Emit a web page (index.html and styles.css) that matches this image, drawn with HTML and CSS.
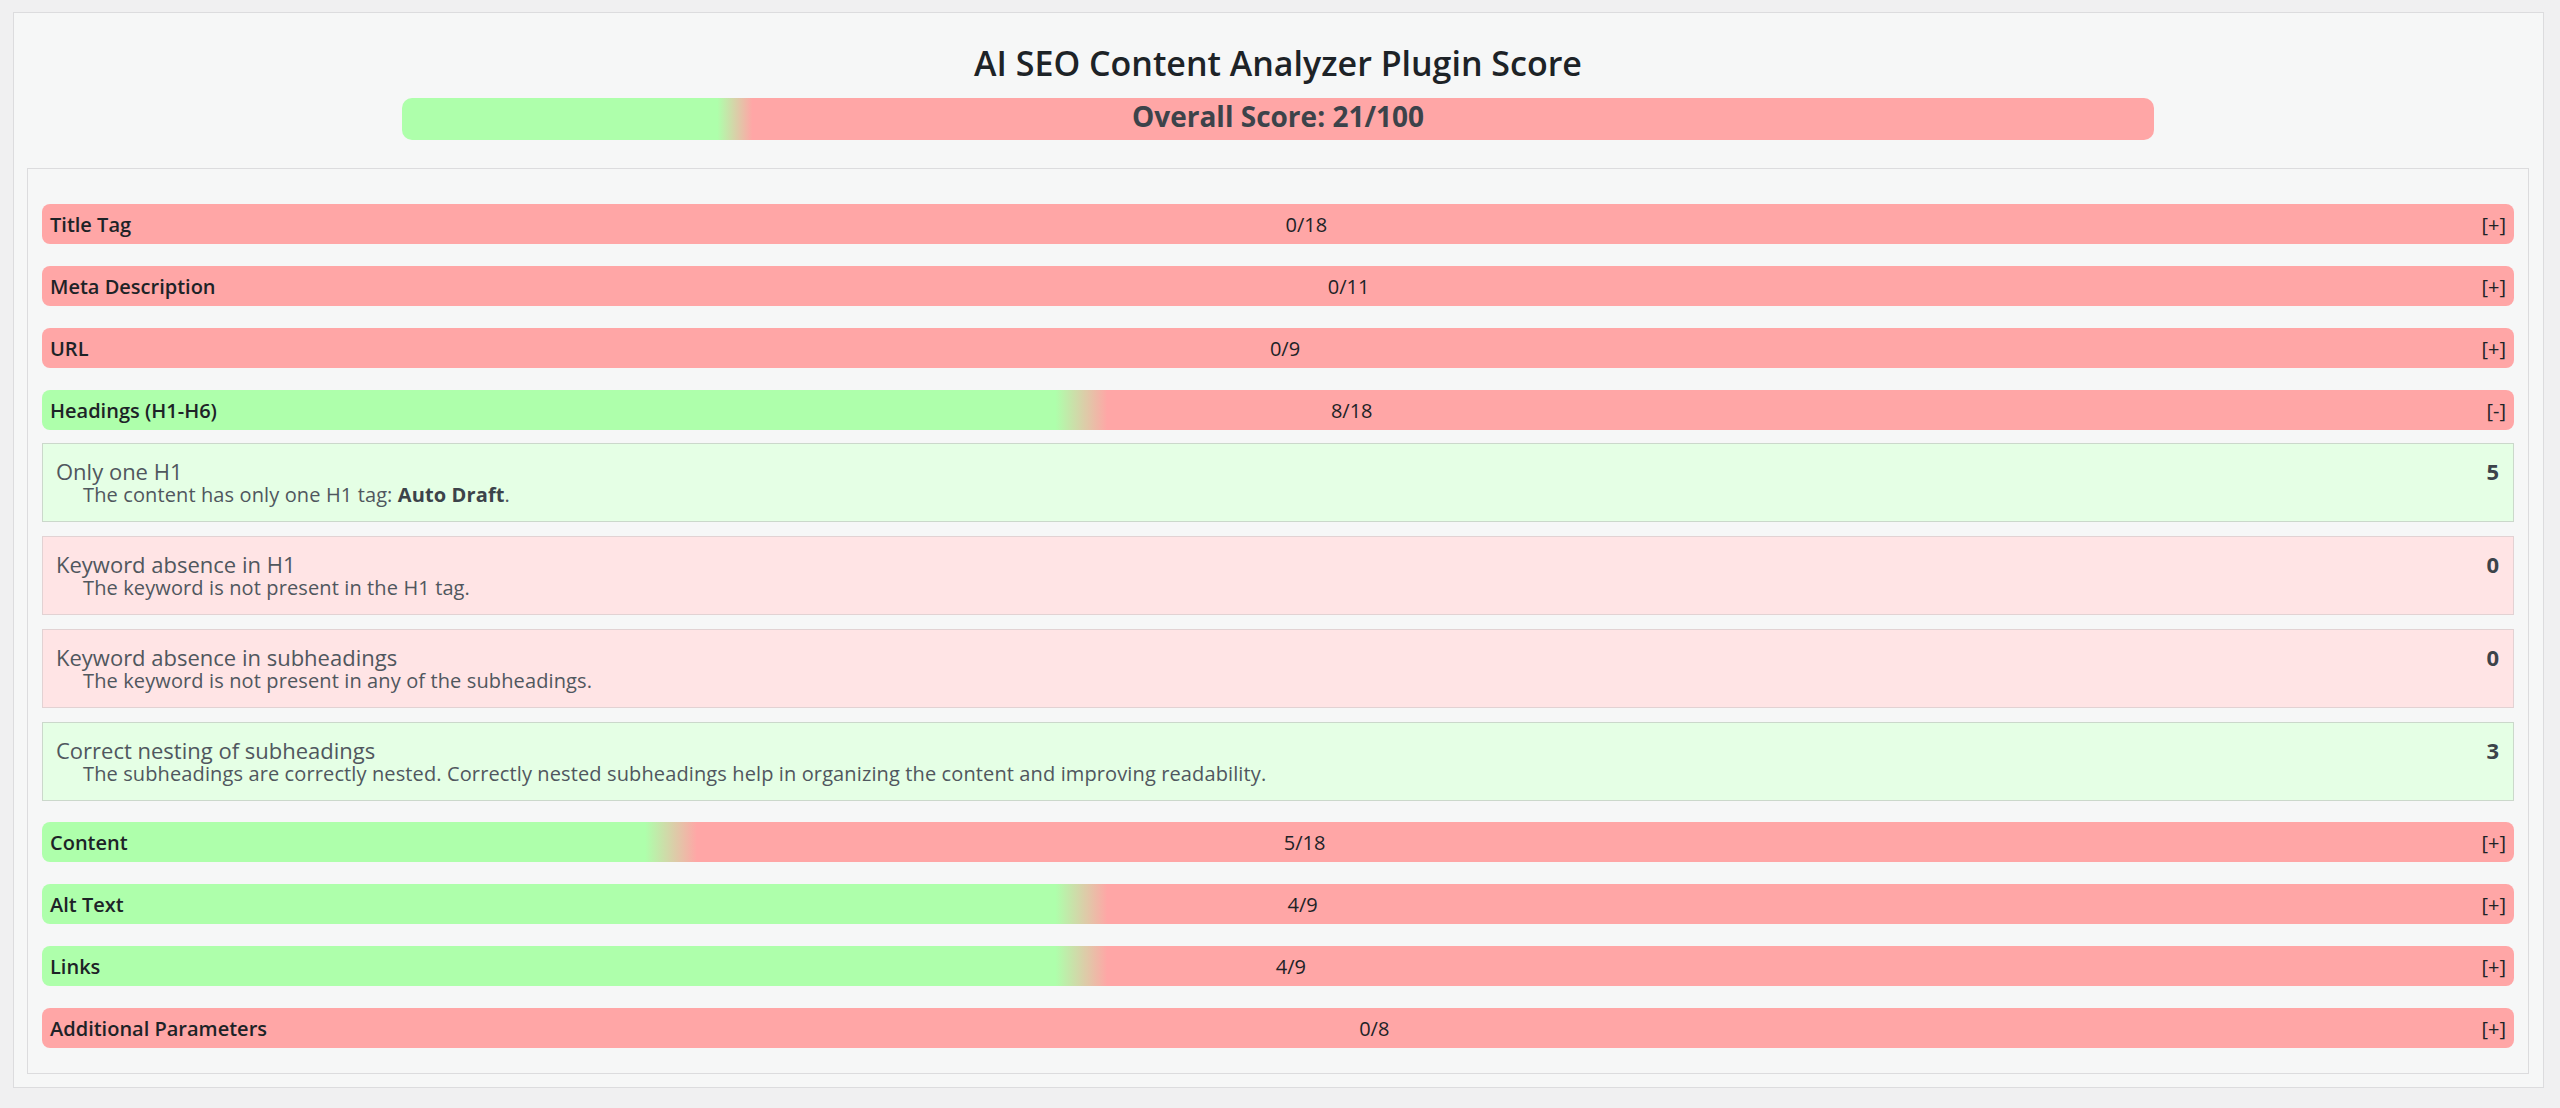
FILE: index.html
```html
<!DOCTYPE html>
<html lang="en">
<head>
<meta charset="utf-8">
<title>AI SEO Content Analyzer Plugin Score</title>
<link rel="stylesheet" href="styles.css">
</head>
<body>
<div class="panel">
  <h2 class="title">AI SEO Content Analyzer Plugin Score</h2>
  <div class="overall" style="--p: 21%">Overall Score: 21/100</div>
  <div class="sections">
    <div class="bar" style="--p: 0%"><span class="label">Title Tag</span><span class="score">0/18</span><span class="toggle">[+]</span></div>
    <div class="bar" style="--p: 0%"><span class="label">Meta Description</span><span class="score">0/11</span><span class="toggle">[+]</span></div>
    <div class="bar" style="--p: 0%"><span class="label">URL</span><span class="score">0/9</span><span class="toggle">[+]</span></div>
    <div class="bar open" style="--p: 44.4%"><span class="label">Headings (H1-H6)</span><span class="score">8/18</span><span class="toggle">[-]</span></div>
    <div class="items">
      <div class="item good">
        <div class="item-text">
          <div class="item-title">Only one H1</div>
          <div class="item-desc">The content has only one H1 tag: <strong>Auto Draft</strong>.</div>
        </div>
        <div class="item-points">5</div>
      </div>
      <div class="item bad">
        <div class="item-text">
          <div class="item-title">Keyword absence in H1</div>
          <div class="item-desc">The keyword is not present in the H1 tag.</div>
        </div>
        <div class="item-points">0</div>
      </div>
      <div class="item bad">
        <div class="item-text">
          <div class="item-title">Keyword absence in subheadings</div>
          <div class="item-desc">The keyword is not present in any of the subheadings.</div>
        </div>
        <div class="item-points">0</div>
      </div>
      <div class="item good">
        <div class="item-text">
          <div class="item-title">Correct nesting of subheadings</div>
          <div class="item-desc">The subheadings are correctly nested. Correctly nested subheadings help in organizing the content and improving readability.</div>
        </div>
        <div class="item-points">3</div>
      </div>
    </div>
    <div class="bar" style="--p: 27.8%"><span class="label">Content</span><span class="score">5/18</span><span class="toggle">[+]</span></div>
    <div class="bar" style="--p: 44.4%"><span class="label">Alt Text</span><span class="score">4/9</span><span class="toggle">[+]</span></div>
    <div class="bar" style="--p: 44.4%"><span class="label">Links</span><span class="score">4/9</span><span class="toggle">[+]</span></div>
    <div class="bar" style="--p: 0%"><span class="label">Additional Parameters</span><span class="score">0/8</span><span class="toggle">[+]</span></div>
  </div>
</div>
</body>
</html>
```
FILE: styles.css
```css
:root {
  --green: #aeffab;
  --red: #ffa6a6;
}

html {
  background: #f0f0f1;
}

body {
  margin: 12px 16px 20px 13px;
  font-family: "Open Sans", "Noto Sans", sans-serif;
  color: #1d2327;
  background: #f0f0f1;
}

.panel {
  background: #f6f7f7;
  border: 1px solid #dcdcde;
  padding: 0 14px 13px 13px;
}

.title {
  margin: 28px 0 13px;
  font-size: 34px;
  line-height: 44px;
  font-weight: 600;
  text-align: center;
  color: #1d2327;
}

.overall {
  width: 70%;
  margin: 0 auto 28px;
  height: 42px;
  box-sizing: border-box;
  padding-bottom: 6px;
  line-height: 36px;
  border-radius: 10px;
  text-align: center;
  font-size: 28px;
  font-weight: 700;
  color: #3c434a;
  background: linear-gradient(to right, var(--green) calc(var(--p) - 3%), var(--red) calc(var(--p) - 1%));
}

.sections {
  border: 1px solid #dcdcde;
  padding: 35px 14px 25px;
  display: flex;
  flex-direction: column;
  gap: 22px;
}

.bar {
  height: 40px;
  box-sizing: border-box;
  padding: 2px 8px 0;
  line-height: 38px;
  border-radius: 8px;
  display: flex;
  justify-content: space-between;
  font-size: 20px;
  color: #1d2327;
  background: linear-gradient(to right, var(--green) calc(var(--p) - 3.4%), var(--red) calc(var(--p) - 1.3%));
}

.bar.open {
  margin-bottom: -9px;
}

.label {
  font-weight: 600;
}

.score,
.toggle {
  font-weight: 400;
}

.items {
  display: flex;
  flex-direction: column;
  gap: 14px;
  margin-bottom: -1px;
}

.item {
  display: flex;
  justify-content: space-between;
  align-items: flex-start;
  border: 1px solid #d2dad2;
  padding: 15px 14px 14px 13px;
  color: #50575e;
}

.item.good {
  background: #e5ffe5;
  border-color: #cbd8cb;
}

.item.bad {
  background: #ffe4e5;
  border-color: #e2d2d3;
}

.item-title {
  font-size: 22px;
  line-height: 24px;
}

.item-desc {
  font-size: 20px;
  line-height: 24px;
  margin-left: 27px;
  letter-spacing: 0.12px;
}

.item-desc strong {
  font-weight: 700;
  color: #3c434a;
}

.item-points {
  font-size: 22px;
  line-height: 24px;
  font-weight: 700;
  color: #3c434a;
}
```
